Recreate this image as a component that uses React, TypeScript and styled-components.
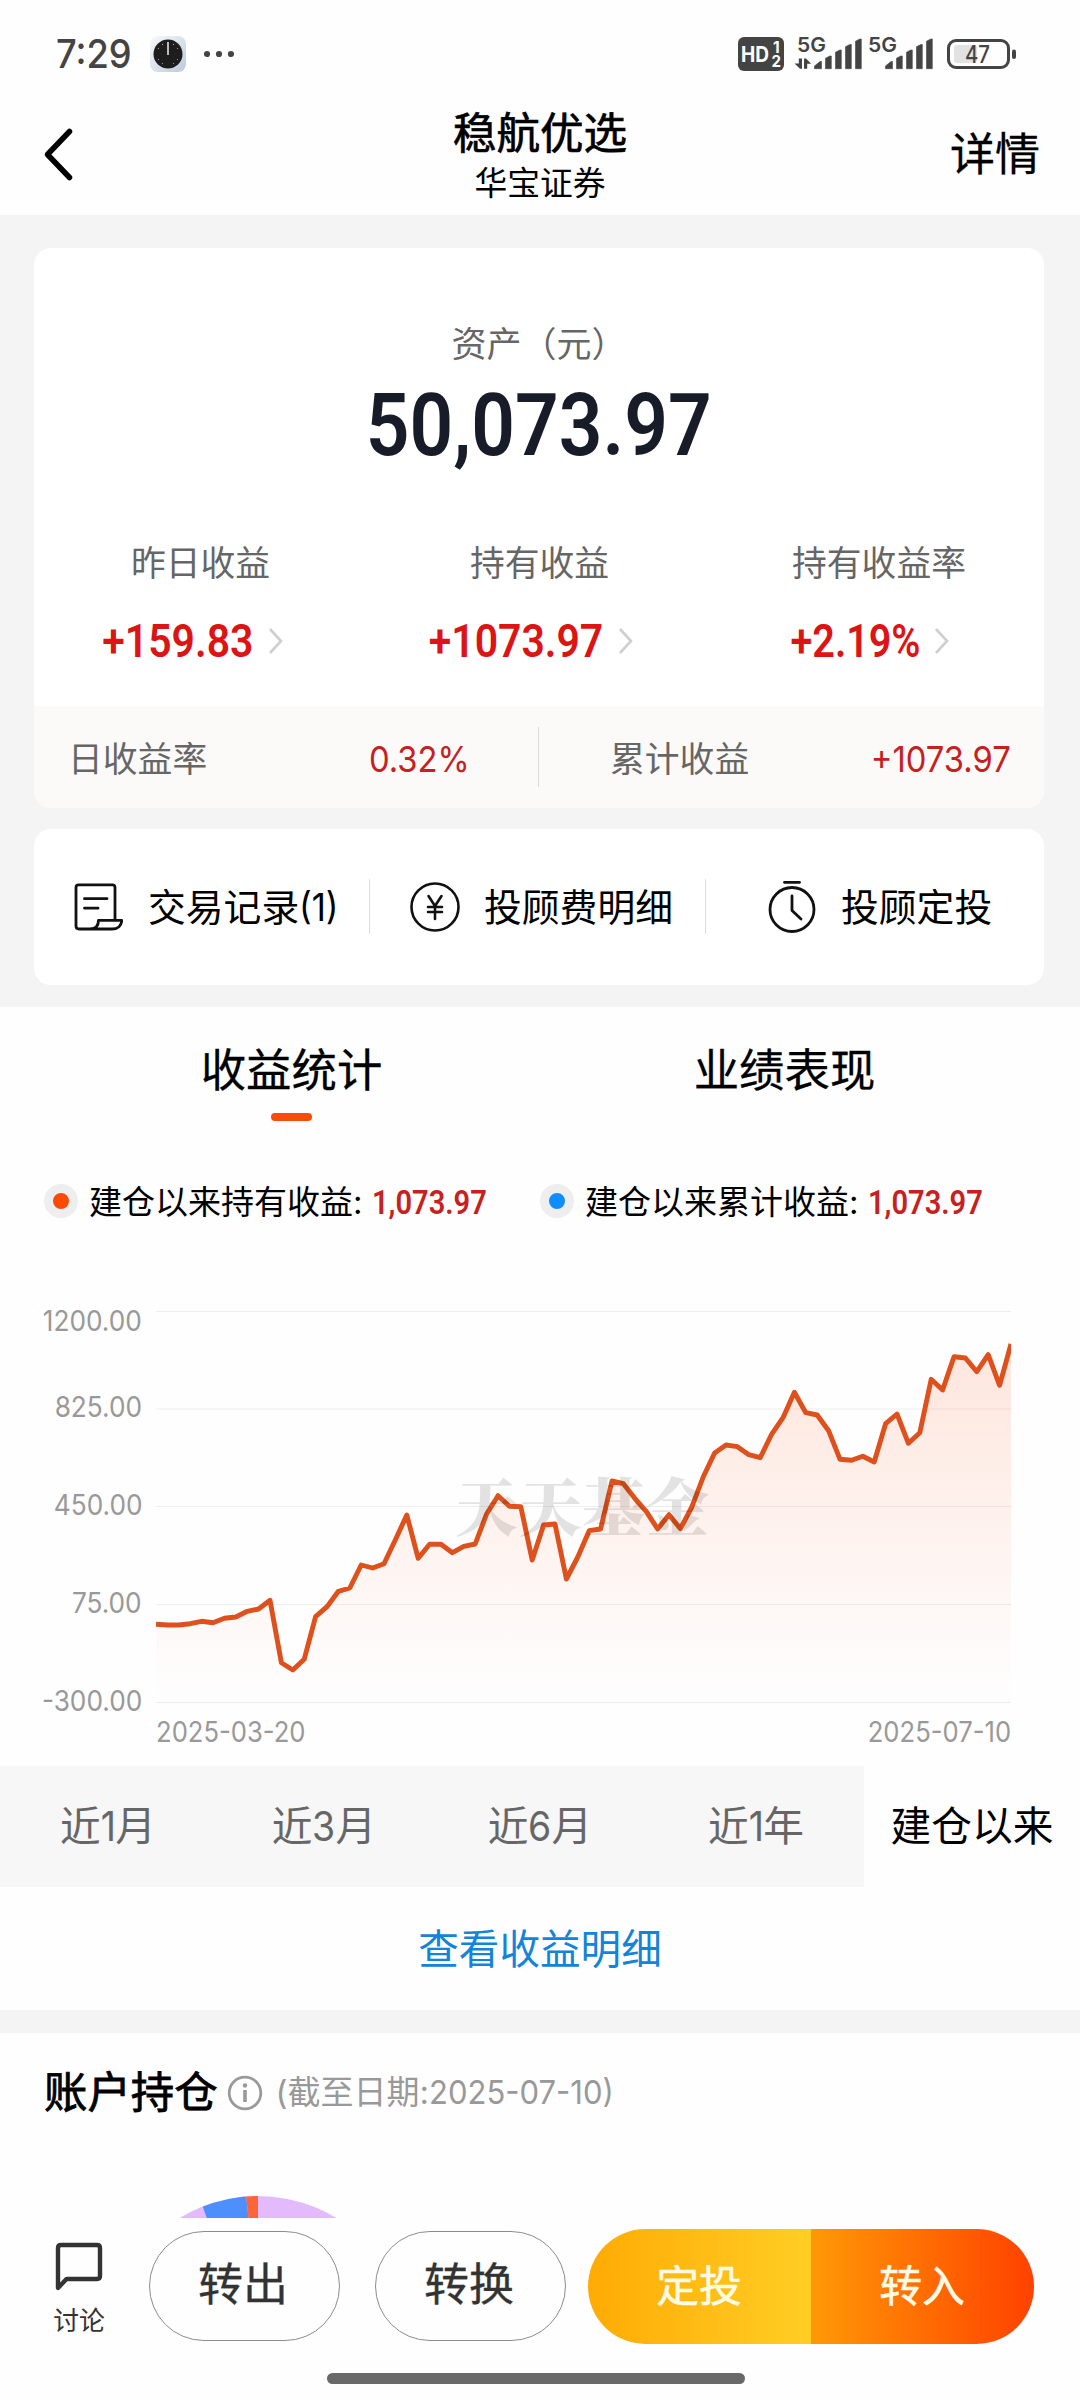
import React from "react";
import styled, { createGlobalStyle } from "styled-components";

const sans = `Inter, "Noto Sans CJK SC", "Noto Sans", sans-serif`;
const numeric = `Roboto, "Noto Sans CJK SC", sans-serif`;

const GlobalStyle = createGlobalStyle`
  html, body { margin: 0; padding: 0; background: #fff; }
  * { box-sizing: border-box; }
`;

const Screen = styled.div`
  width: 1080px;
  height: 2400px;
  overflow: hidden;
  display: flex;
  flex-direction: column;
  background: #fefefe;
  font-family: ${sans};
  color: #000;
  white-space: nowrap;
`;

/* ---------- shared ---------- */

const Num = styled.span<{ $scale?: number; $origin?: string }>`
  display: inline-block;
  transform: scaleX(${(p) => p.$scale ?? 1});
  transform-origin: ${(p) => p.$origin ?? "center"} center;
`;

const Divider = styled.div<{ $h: number }>`
  flex: none;
  width: 1px;
  height: ${(p) => p.$h}px;
  background: #dcdcdc;
`;

/* ---------- status bar ---------- */

const StatusBar = styled.div`
  flex: none;
  height: 92px;
  padding: 16px 64px 0 56px;
  display: flex;
  align-items: center;
  color: #444;
`;

const Clock = styled.div`
  width: 94px;
  font-size: 39px;
  font-weight: 500;
  line-height: 40px;
`;

const StatusSpacer = styled.div`
  flex: 1;
`;

/* ---------- header ---------- */

const Header = styled.header`
  flex: none;
  height: 123px;
  display: grid;
  grid-template-columns: 200px 1fr 200px;
  align-items: center;
`;

const BackButton = styled.div`
  padding-left: 42px;
  display: flex;
`;

const TitleBlock = styled.div`
  padding-top: 5px;
  display: flex;
  flex-direction: column;
  align-items: center;
`;

const Title = styled.div`
  font-size: 43.6px;
  line-height: 54px;
  -webkit-text-stroke: 0.7px #000;
`;

const Subtitle = styled.div`
  font-size: 32.8px;
  line-height: 45px;
`;

const DetailLink = styled.div`
  padding: 2px 40px 0 0;
  text-align: right;
  font-size: 45px;
  line-height: 56px;
  -webkit-text-stroke: 0.3px #000;
`;

/* ---------- asset summary ---------- */

const Summary = styled.div`
  flex: none;
  height: 792px;
  padding: 33px 36px 22px 34px;
  display: flex;
  flex-direction: column;
  gap: 21px;
  background: #f4f4f4;
`;

const AssetCard = styled.section`
  height: 560px;
  padding-top: 72px;
  border-radius: 17px;
  overflow: hidden;
  background: #fff;
  display: flex;
  flex-direction: column;
`;

const AssetLabel = styled.div`
  text-align: center;
  font-size: 35px;
  line-height: 48px;
  color: #666;
`;

const AssetValue = styled.div`
  margin-top: 21px;
  text-align: center;
  font-family: ${numeric};
  font-size: 88px;
  font-weight: 600;
  line-height: 72px;
  color: #181c28;
`;

const Metrics = styled.div`
  margin-top: 78px;
  display: grid;
  grid-template-columns: 333px 345px 334px;
`;

const Metric = styled.div`
  display: flex;
  flex-direction: column;
  align-items: center;
  gap: 30px;
`;

const MetricLabel = styled.div`
  font-size: 34.8px;
  line-height: 48px;
  color: #666;
`;

const MetricValue = styled.div<{ $w: number }>`
  width: ${(p) => p.$w + 31}px;
  margin-right: 15px;
  display: flex;
  align-items: center;
  justify-content: space-between;
  font-family: ${numeric};
  font-size: 46px;
  font-weight: 600;
  line-height: 48px;
  color: #dc1414;
`;

const MetricNumber = styled.div<{ $w: number }>`
  width: ${(p) => p.$w}px;
  display: flex;
  justify-content: center;
`;

const Strip = styled.div`
  margin-top: auto;
  height: 102px;
  display: flex;
  align-items: center;
  background: #fbfaf8;
`;

const StripCell = styled.div<{ $l: number; $r: number }>`
  width: 504px;
  padding: 3px ${(p) => p.$r}px 0 ${(p) => p.$l}px;
  display: flex;
  align-items: center;
  justify-content: space-between;
  font-size: 34.8px;
  line-height: 48px;
  color: #666;
`;

const StripValue = styled.div`
  font-size: 36px;
  color: #c62020;
`;

const ActionCard = styled.section`
  height: 156px;
  border-radius: 17px;
  background: #fff;
  display: flex;
  align-items: center;
  padding-bottom: 1px;
`;

const Action = styled.div<{ $w: number; $l: number; $gap: number }>`
  width: ${(p) => p.$w}px;
  padding-left: ${(p) => p.$l}px;
  display: flex;
  align-items: center;
  gap: ${(p) => p.$gap}px;
  font-size: 37.8px;
  line-height: 54px;

  svg { flex: none; display: block; }
`;

/* ---------- statistics ---------- */

const TabBar = styled.div`
  flex: none;
  padding: 34px 0 0 45px;
  display: flex;
`;

const Tab = styled.div`
  width: 493px;
  display: flex;
  flex-direction: column;
  align-items: center;
  gap: 12px;
  font-size: 45.4px;
  line-height: 60px;
  -webkit-text-stroke: 0.3px #000;
`;

const TabMark = styled.div<{ $on?: boolean }>`
  width: 41px;
  height: 8px;
  border-radius: 4px;
  background: ${(p) => (p.$on ? "#f94c0c" : "transparent")};
`;

const Legend = styled.div`
  flex: none;
  margin-top: 63px;
  padding-left: 44px;
  display: flex;
`;

const LegendItem = styled.div`
  width: 496px;
  height: 34px;
  display: flex;
  align-items: center;
`;

const LegendDot = styled.div<{ $c: string }>`
  width: 34px;
  height: 34px;
  border-radius: 50%;
  border: 9.5px solid #eee;
  background: ${(p) => p.$c};
`;

const LegendLabel = styled.div`
  width: 294px;
  padding: 1px 0 0 11px;
  font-size: 33px;
  line-height: 34px;
`;

const LegendValue = styled.div`
  padding-top: 2px;
  font-family: ${numeric};
  font-size: 34px;
  font-weight: 600;
  line-height: 34px;
  color: #c62020;
`;

const Chart = styled.div`
  flex: none;
  margin-top: 66px;
  height: 482px;
  display: flex;
  font-size: 28.8px;
  color: #999;
`;

const YAxis = styled.div`
  width: 156px;
  padding-right: 14px;
  display: flex;
  flex-direction: column;
  align-items: flex-end;
`;

const YLabel = styled.div<{ $h: number }>`
  height: ${(p) => p.$h}px;
  line-height: ${(p) => p.$h}px;
`;

const Plot = styled.div`
  width: 855px;

  svg { display: block; }
`;

const Dates = styled.div`
  height: 36px;
  line-height: 36px;
  display: flex;
  justify-content: space-between;
`;

const Periods = styled.div`
  flex: none;
  height: 121px;
  display: flex;
`;

const Period = styled.div<{ $on?: boolean }>`
  width: 216px;
  padding-top: 1px;
  line-height: 60px;
  display: flex;
  align-items: center;
  justify-content: center;
  font-size: 40.7px;
  color: ${(p) => (p.$on ? "#000" : "#666")};
  background: ${(p) => (p.$on ? "transparent" : "#f7f7f7")};
`;

const PeriodDigit = styled.span`
  display: inline-block;
  margin: 0 -1px;
  transform: scaleX(0.92);
`;

const DetailRow = styled.div`
  flex: none;
  height: 123px;
  padding-top: 2px;
  line-height: 60px;
  display: flex;
  align-items: center;
  justify-content: center;
  font-size: 40.6px;
  color: #1483da;
`;

const Band = styled.div`
  flex: none;
  height: 23px;
  background: #f4f4f4;
`;

/* ---------- holdings ---------- */

const Holdings = styled.section`
  flex: none;
  height: 185px;
  padding: 34px 0 0 44px;
`;

const HoldingsHead = styled.div`
  height: 50px;
  padding-top: 1px;
  display: flex;
  align-items: center;
  line-height: 49px;
  color: #999;

  svg { display: block; margin: 0 13px 0 9px; }
`;

const HoldingsTitle = styled.div`
  font-size: 43.4px;
  -webkit-text-stroke: 0.8px #000;
  color: #000;
`;

const HoldingsDate = styled.div`
  display: flex;
  font-size: 33px;
`;

const PieClip = styled.div`
  margin: 78px 0 0 134px;
  height: 23px;

  svg { display: block; }
`;

/* ---------- footer ---------- */

const Footer = styled.footer`
  flex: none;
  height: 182px;
  background: #fefefe;
  display: flex;
  flex-direction: column;
  align-items: center;
`;

const FooterRow = styled.div`
  width: 1080px;
  height: 136px;
  display: flex;
  align-items: center;
`;

const Discuss = styled.div`
  width: 149px;
  padding: 8px 0 0 9px;
  display: flex;
  flex-direction: column;
  align-items: center;
  gap: 12px;
  font-size: 25.8px;
  line-height: 34px;
  color: #333;

  svg { display: block; }
`;

const PillButton = styled.div<{ $mr: number }>`
  width: 191px;
  height: 110px;
  margin-right: ${(p) => p.$mr}px;
  padding: 0 3px 2px 0;
  line-height: 60px;
  border: 1.5px solid #8c8c8c;
  border-radius: 55px;
  display: flex;
  align-items: center;
  justify-content: center;
  font-size: 45px;
  color: #333;
  -webkit-text-stroke: 0.3px #333;
`;

const SplitButton = styled.div`
  width: 446px;
  height: 115px;
  border-radius: 58px;
  overflow: hidden;
  display: flex;
`;

const SplitHalf = styled.div<{ $from: string; $to: string }>`
  flex: 1;
  padding: 2px 1px 0 0;
  line-height: 60px;
  display: flex;
  align-items: center;
  justify-content: center;
  font-size: 42.8px;
  -webkit-text-stroke: 0.6px #fffbe6;
  color: #fffbe6;
  background: linear-gradient(90deg, ${(p) => p.$from}, ${(p) => p.$to});
`;

const HomeIndicator = styled.div`
  width: 418px;
  height: 11px;
  margin: 19px 0 0 -8px;
  border-radius: 6px;
  background: #696969;
`;

/* ---------- drawings ---------- */

const AppIcon = () => (
  <svg width="36" height="36" viewBox="0 0 36 36">
    <defs>
      <linearGradient id="tile" x1="0" y1="0" x2="1" y2="1">
        <stop offset="0" stopColor="#f8fafc" />
        <stop offset="1" stopColor="#bccadb" />
      </linearGradient>
    </defs>
    <rect width="36" height="36" rx="8" fill="url(#tile)" />
    <circle cx="18" cy="18" r="14.5" fill="#1d1d1d" />
    {[30, 60, 120, 150, 210, 240, 300, 330].map((a) => (
      <circle
        key={a}
        cx={18 + 11 * Math.sin((a * Math.PI) / 180)}
        cy={18 - 11 * Math.cos((a * Math.PI) / 180)}
        r="0.6"
        fill="#aaa"
      />
    ))}
    <path d="M18 6v13" stroke="#b9b9b9" strokeWidth="2" />
  </svg>
);

const MoreDots = () => (
  <svg width="30" height="8" viewBox="0 0 30 8" style={{ marginLeft: 18 }}>
    {[3, 15, 27].map((x) => (
      <circle key={x} cx={x} cy="4" r="3.1" fill="#444" />
    ))}
  </svg>
);

const bars = [
  [0, 26.5], [11, 21], [21, 15], [31, 9.5], [41, 4],
];

const Signal = ({ x }: { x: number }) => (
  <g transform={`translate(${x} 0)`}>
    {bars.map(([bx, top]) => {
      const w = bx === 0 ? 7 : 5.8;
      return (
        <path
          key={bx}
          d={`M${bx} 33.7V${top + (bx === 0 ? 4.5 : 2.2)}L${bx + w - 1.5} ${top}H${bx + w}V33.7Z`}
          stroke="#444"
          strokeWidth="0.6"
          strokeLinejoin="round"
          fill="#444"
        />
      );
    })}
  </g>
);

const StatusIcons = () => (
  <svg width="280" height="54" viewBox="0 -8 280 54" fontFamily="Inter, sans-serif" fill="#444">
    <rect x="2" y="2" width="46" height="34" rx="6" />
    <text x="5" y="26.5" fontSize="21" fontWeight="700" fill="#fff" textLength="28" lengthAdjust="spacingAndGlyphs">HD</text>
    <text x="37" y="17.5" fontSize="15.5" fontWeight="700" fill="#fff">1</text>
    <text x="35.5" y="32.3" fontSize="15.5" fontWeight="700" fill="#fff" textLength="9.5" lengthAdjust="spacingAndGlyphs">2</text>
    <text x="61" y="17" fontSize="20.5" fontWeight="600" textLength="29" lengthAdjust="spacingAndGlyphs">5G</text>
    <path d="M58.5 28.5H62.8V23.5H66V33.8H64ZM68 33.8V23.5H70L75.2 28.8H71.2V33.8Z" />
    <Signal x={78.5} />
    <text x="132" y="17" fontSize="20.5" fontWeight="600" textLength="29" lengthAdjust="spacingAndGlyphs">5G</text>
    <Signal x={149.5} />
    <rect x="212.5" y="5.5" width="60" height="27" rx="7.5" fill="none" stroke="#444" strokeWidth="3" />
    <rect x="218" y="10" width="23" height="18" rx="3" fill="#e2e2e2" />
    <rect x="276" y="14.5" width="4" height="9.5" rx="2" />
    <text x="229" y="27.8" fontSize="24" fontWeight="500" textLength="25" lengthAdjust="spacingAndGlyphs">47</text>
  </svg>
);

const Chevron = () => (
  <svg width="16" height="28" viewBox="0 0 16 28">
    <path d="M2 2l11 12L2 26" fill="none" stroke="#cfcfcf" strokeWidth="2.6" />
  </svg>
);

const RecordIcon = () => (
  <svg width="50" height="50" viewBox="0 0 50 50" fill="none" stroke="#111" strokeWidth="2.8" strokeLinejoin="round" strokeLinecap="round">
    <path d="M42 38V5.500Q42 2.900 39.500 2.900H5.500Q3 2.900 3 5.500V44Q3 47 6 47H39C45 47 48.500 43.500 48.800 38.300H25.500C25.500 43.500 23 47 17 47" />
    <path d="M11.500 16.700H34M11.500 26.200H25" />
  </svg>
);

const YenIcon = () => (
  <svg width="50" height="50" viewBox="0 0 50 50" fill="none" stroke="#111" strokeWidth="2.6" strokeLinecap="round">
    <circle cx="25" cy="25" r="23.5" />
    <path d="M18.5 14L25 24L31.5 14M25 24V37M18 25H32M18 30H32" />
  </svg>
);

const TimerIcon = () => (
  <svg width="48" height="54" viewBox="0 0 48 54" fill="none" stroke="#111" strokeWidth="2.8" strokeLinecap="round" strokeLinejoin="round">
    <path d="M16.5 2.3H31.5" />
    <circle cx="24" cy="29.5" r="22" />
    <path d="M24 16V30.5L33 39" />
  </svg>
);

const InfoIcon = () => (
  <svg width="36" height="36" viewBox="0 0 36 36" fill="none" stroke="#999" strokeWidth="2.8">
    <circle cx="18" cy="18" r="15.8" />
    <circle cx="18" cy="10.5" r="2.2" fill="#999" stroke="none" />
    <path d="M18 15V27" strokeWidth="3.6" />
  </svg>
);

const ChatIcon = () => (
  <svg width="48" height="50" viewBox="0 0 48 50">
    <path d="M3 46V6Q3 3 6 3H42Q45 3 45 6V34Q45 37 42 37H11.5Z" fill="none" stroke="#333" strokeWidth="4.4" strokeLinejoin="round" />
  </svg>
);

const PieTop = () => (
  <svg width="160" height="23" viewBox="0 0 160 23">
    <defs>
      <clipPath id="pieEdge">
        <circle cx="80" cy="152" r="151" />
      </clipPath>
    </defs>
    <g clipPath="url(#pieEdge)">
      <rect width="160" height="23" fill="#e3bbfd" />
      <path d="M20.5 0L28.8 23H70.5L68 0Z" fill="#4d8ffd" />
      <path d="M68 0L70.5 23H80V0Z" fill="#fd6536" />
    </g>
  </svg>
);

/* Heights of the curve at each trading day, measured down from the top of the plot. */
const curve = [
  1033, 1035, 1035, 1031, 1024, 1028, 1015, 1011, 994, 987, 961, 1148, 1170, 1138, 1010, 980,
  934, 924, 855, 864, 851, 779, 705, 835, 793, 793, 818, 799, 792, 702, 647, 679, 680, 840, 735,
  732, 897, 831, 752, 747, 603, 611, 655, 694, 747, 704, 746, 681, 591, 519, 495, 500, 524, 533,
  463, 413, 337, 398, 405, 452, 538, 541, 529, 546, 431, 402, 490, 458, 298, 330, 230, 234, 275,
  224, 316, 192,
].map((v) => v / 3 - 4);

const points = curve.map((y, i) => `${(i * 11.4).toFixed(1)},${y.toFixed(1)}`).join(" L");

const ProfitChart = () => (
  <svg width="855" height="430" viewBox="0 0 855 430">
    <defs>
      <linearGradient id="area" gradientUnits="userSpaceOnUse" x1="0" y1="60" x2="0" y2="418">
        <stop offset="0" stopColor="#ff4400" stopOpacity="0.13" />
        <stop offset="1" stopColor="#ff4400" stopOpacity="0" />
      </linearGradient>
    </defs>
    {[27.5, 125, 222.5, 320.5, 418.5].map((y) => (
      <path key={y} d={`M0 ${y}H855`} stroke="#eeeeee" strokeWidth="1.2" />
    ))}
    <path d={`M${points} L855,418 L0,418Z`} fill="url(#area)" />
    <path d={`M${points}`} fill="none" stroke="#de501c" strokeWidth="4.9" strokeLinejoin="round" />
    <text
      x="299"
      y="246"
      fontFamily='"Noto Serif CJK SC", "Noto Sans CJK SC", sans-serif'
      fontSize="63"
      fontWeight="900"
      fill="#000"
      fillOpacity="0.11"
      textLength="254"
    >
      天天基金
    </text>
  </svg>
);

/* ---------- data ---------- */

const metrics = [
  { label: "昨日收益", value: "+159.83", w: 150 },
  { label: "持有收益", value: "+1073.97", w: 172 },
  { label: "持有收益率", value: "+2.19%", w: 126 },
];

const yLabels = ["1200.00", "825.00", "450.00", "75.00", "-300.00"];

export default function App() {
  return (
    <Screen>
      <GlobalStyle />
      <StatusBar>
        <Clock>
          <Num $scale={0.93} $origin="left">7:29</Num>
        </Clock>
        <AppIcon />
        <MoreDots />
        <StatusSpacer />
        <StatusIcons />
      </StatusBar>

      <Header>
        <BackButton>
          <svg width="34" height="56" viewBox="0 0 34 56">
            <path d="M27.5 5.5L5.5 28.5L27.5 51.5" fill="none" stroke="#000" strokeWidth="5.5" strokeLinecap="round" strokeLinejoin="round" />
          </svg>
        </BackButton>
        <TitleBlock>
          <Title>稳航优选</Title>
          <Subtitle>华宝证券</Subtitle>
        </TitleBlock>
        <DetailLink>详情</DetailLink>
      </Header>

      <Summary>
        <AssetCard>
          <AssetLabel>资产（元）</AssetLabel>
          <AssetValue>
            <Num $scale={0.87}>50,073.97</Num>
          </AssetValue>
          <Metrics>
            {metrics.map((m) => (
              <Metric key={m.label}>
                <MetricLabel>{m.label}</MetricLabel>
                <MetricValue $w={m.w}>
                  <MetricNumber $w={m.w}>
                    <Num $scale={m.value.endsWith("%") ? 0.86 : 0.89}>{m.value}</Num>
                  </MetricNumber>
                  <Chevron />
                </MetricValue>
              </Metric>
            ))}
          </Metrics>
          <Strip>
            <StripCell $l={34} $r={68}>
              日收益率
              <StripValue>
                <Num $scale={0.91} $origin="right">0.32%</Num>
              </StripValue>
            </StripCell>
            <Divider $h={60} />
            <StripCell $l={71} $r={32}>
              累计收益
              <StripValue>
                <Num $scale={0.91} $origin="right">+1073.97</Num>
              </StripValue>
            </StripCell>
          </Strip>
        </AssetCard>

        <ActionCard>
          <Action $w={335} $l={39} $gap={25}>
            <RecordIcon />
            <span>交易记录<Num $scale={0.92} $origin="left">(1)</Num></span>
          </Action>
          <Divider $h={55} />
          <Action $w={335} $l={40} $gap={24}>
            <YenIcon />
            投顾费明细
          </Action>
          <Divider $h={55} />
          <Action $w={338} $l={62} $gap={25}>
            <TimerIcon />
            投顾定投
          </Action>
        </ActionCard>
      </Summary>

      <TabBar>
        <Tab>
          收益统计
          <TabMark $on />
        </Tab>
        <Tab>
          业绩表现
          <TabMark />
        </Tab>
      </TabBar>

      <Legend>
        <LegendItem>
          <LegendDot $c="#fb4a04" />
          <LegendLabel>建仓以来持有收益:</LegendLabel>
          <LegendValue>
            <Num $scale={0.855} $origin="left">1,073.97</Num>
          </LegendValue>
        </LegendItem>
        <LegendItem>
          <LegendDot $c="#0f8eff" />
          <LegendLabel>建仓以来累计收益:</LegendLabel>
          <LegendValue>
            <Num $scale={0.855} $origin="left">1,073.97</Num>
          </LegendValue>
        </LegendItem>
      </Legend>

      <Chart>
        <YAxis>
          {yLabels.map((t, i) => (
            <YLabel key={t} $h={i === 0 ? 74 : 98}>
              <Num $scale={0.91} $origin="right">{t}</Num>
            </YLabel>
          ))}
        </YAxis>
        <Plot>
          <ProfitChart />
          <Dates>
            <Num $scale={0.89} $origin="left">2025-03-20</Num>
            <Num $scale={0.89} $origin="right">2025-07-10</Num>
          </Dates>
        </Plot>
      </Chart>

      <Periods>
        <Period>近<PeriodDigit>1</PeriodDigit>月</Period>
        <Period>近<PeriodDigit>3</PeriodDigit>月</Period>
        <Period>近<PeriodDigit>6</PeriodDigit>月</Period>
        <Period>近<PeriodDigit>1</PeriodDigit>年</Period>
        <Period $on>建仓以来</Period>
      </Periods>

      <DetailRow>查看收益明细</DetailRow>
      <Band />

      <Holdings>
        <HoldingsHead>
          <HoldingsTitle>账户持仓</HoldingsTitle>
          <InfoIcon />
          <HoldingsDate>
            (截至日期:
            <Num $scale={0.94} $origin="left">2025-07-10)</Num>
          </HoldingsDate>
        </HoldingsHead>
        <PieClip>
          <PieTop />
        </PieClip>
      </Holdings>

      <Footer>
        <FooterRow>
          <Discuss>
            <ChatIcon />
            讨论
          </Discuss>
          <PillButton $mr={35}>转出</PillButton>
          <PillButton $mr={22}>转换</PillButton>
          <SplitButton>
            <SplitHalf $from="#ffab04" $to="#ffce25">定投</SplitHalf>
            <SplitHalf $from="#ff9906" $to="#ff4100">转入</SplitHalf>
          </SplitButton>
        </FooterRow>
        <HomeIndicator />
      </Footer>
    </Screen>
  );
}
